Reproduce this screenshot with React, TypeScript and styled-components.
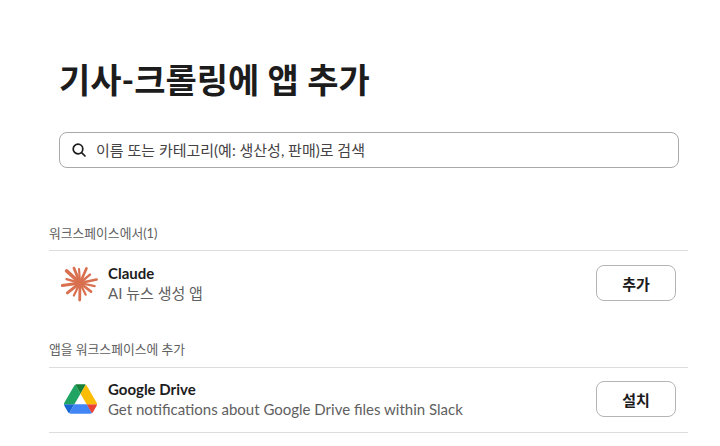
import React from "react";
import styled, { createGlobalStyle } from "styled-components";

const Global = createGlobalStyle`
  html, body { margin: 0; padding: 0; background: #fff; }
  body { font-family: Lato, "Noto Sans CJK KR", sans-serif; color: #1d1c1d; }
`;

const Page = styled.div`
  width: 720px;
  height: 446px;
  overflow: hidden;
  box-sizing: border-box;
  padding: 56px 32px 0 49px;
`;

const Intro = styled.div`
  padding-left: 10px;
  padding-right: 9px;
`;

const Title = styled.h1`
  margin: 0;
  font-size: 34px;
  line-height: 48px;
  font-weight: 700;
  color: #1d1c1d;
`;

const SearchBox = styled.div`
  margin-top: 28px;
  height: 36px;
  box-sizing: border-box;
  border: 1px solid #a9a9aa;
  border-radius: 8px;
  display: flex;
  align-items: center;
  gap: 9px;
  padding: 0 11px 2px;
  font-size: 15px;
  color: #454245;
`;

const SearchGlyph = styled.svg`
  margin-top: 2px;
  flex: none;
`;

const SectionLabel = styled.div<{ $top: number; $height: number }>`
  margin-top: ${(p) => p.$top}px;
  height: ${(p) => p.$height}px;
  font-size: 12.8px;
  line-height: 16px;
  color: #616061;
  border-bottom: 1px solid #dddddd;
`;

const Row = styled.div<{ $ruled?: boolean }>`
  height: 64px;
  box-sizing: border-box;
  display: flex;
  align-items: center;
  padding: 0 12px ${(p) => (p.$ruled ? "2px" : "0")};
  border-bottom: ${(p) => (p.$ruled ? "1px solid #dddddd" : "none")};
  ${(p) => (p.$ruled ? "height: 65px;" : "")}
`;

const Logo = styled.div`
  width: 38px;
  height: 38px;
  margin-right: 9px;
  display: flex;
  align-items: center;
  justify-content: center;
  flex: none;
`;

const Info = styled.div`
  flex: 1;
  min-width: 0;
`;

const Name = styled.div`
  font-size: 15px;
  line-height: 19px;
  font-weight: 700;
  color: #1d1c1d;
`;

const Desc = styled.div`
  font-size: 15px;
  line-height: 20px;
  color: #616061;
`;

const ActionButton = styled.button`
  width: 80px;
  height: 36px;
  box-sizing: border-box;
  background: #fff;
  border: 1px solid #b5b5b6;
  border-radius: 8px;
  font-family: inherit;
  font-size: 15px;
  font-weight: 700;
  color: #1d1c1d;
  padding: 0;
`;

const SearchIcon = () => (
  <SearchGlyph width="16" height="16" viewBox="0 0 16 16" fill="none" stroke="#1d1c1d" strokeWidth="1.7" strokeLinecap="round">
    <circle cx="7" cy="7" r="4.8" />
    <path d="M10.6 10.6 14 14" />
  </SearchGlyph>
);

const rays: [number, number, number][] = [
  [-4, 14, 2.2], [24, 16, 2.6], [50, 13, 2.4], [78, 17, 2.6], [102, 15, 2.2], [128, 14, 2.6], [154, 13, 2.2],
  [181, 17, 2.8], [206, 14, 2.2], [232, 16, 3], [262, 18, 3], [286, 14, 2.4], [312, 18, 3.6], [338, 16, 2.8],
];

const ClaudeLogo = () => (
  <svg width="38" height="38" viewBox="0 0 38 38" stroke="#d9704f" strokeLinecap="round">
    {rays.map(([a, len, w]) => {
      const r = (a * Math.PI) / 180;
      return <line key={a} strokeWidth={w} x1="19" y1="19" x2={19 + Math.sin(r) * len} y2={19 - Math.cos(r) * len} />;
    })}
  </svg>
);

const DriveLogo = () => (
  <svg width="33" height="30" viewBox="0 0 87.3 78">
    <path d="m6.6 66.85 3.85 6.65c.8 1.4 1.95 2.5 3.3 3.3l13.75-23.8h-27.5c0 1.55.4 3.1 1.2 4.5z" fill="#1967d2" />
    <path d="m43.65 25-13.75-23.8c-1.35.8-2.5 1.9-3.3 3.3l-25.4 44a9.06 9.06 0 0 0 -1.2 4.5h27.5z" fill="#1fa463" />
    <path d="m73.55 76.8c1.35-.8 2.5-1.9 3.3-3.3l1.6-2.75 7.65-13.25c.8-1.4 1.2-2.95 1.2-4.5h-27.502l5.852 11.5z" fill="#ea4335" />
    <path d="m43.65 25 13.75-23.8c-1.35-.8-2.9-1.2-4.5-1.2h-18.5c-1.6 0-3.15.45-4.5 1.2z" fill="#188038" />
    <path d="m59.8 53h-32.3l-13.75 23.8c1.35.8 2.9 1.2 4.5 1.2h50.8c1.6 0 3.15-.45 4.5-1.2z" fill="#4285f4" />
    <path d="m73.4 26.5-12.7-22c-.8-1.4-1.95-2.5-3.3-3.3l-13.75 23.8 16.15 28h27.45c0-1.55-.4-3.1-1.2-4.5z" fill="#fbbc04" />
  </svg>
);

export default function App() {
  return (
    <Page>
      <Global />
      <Intro>
        <Title>기사-크롤링에 앱 추가</Title>
        <SearchBox>
          <SearchIcon />
          <span>이름 또는 카테고리(예: 생산성, 판매)로 검색</span>
        </SearchBox>
      </Intro>

      <SectionLabel $top={57} $height={25}>워크스페이스에서(1)</SectionLabel>
      <Row>
        <Logo><ClaudeLogo /></Logo>
        <Info>
          <Name>Claude</Name>
          <Desc>AI 뉴스 생성 앱</Desc>
        </Info>
        <ActionButton>추가</ActionButton>
      </Row>

      <SectionLabel $top={26} $height={26}>앱을 워크스페이스에 추가</SectionLabel>
      <Row $ruled>
        <Logo><DriveLogo /></Logo>
        <Info>
          <Name>Google Drive</Name>
          <Desc>Get notifications about Google Drive files within Slack</Desc>
        </Info>
        <ActionButton>설치</ActionButton>
      </Row>
    </Page>
  );
}
